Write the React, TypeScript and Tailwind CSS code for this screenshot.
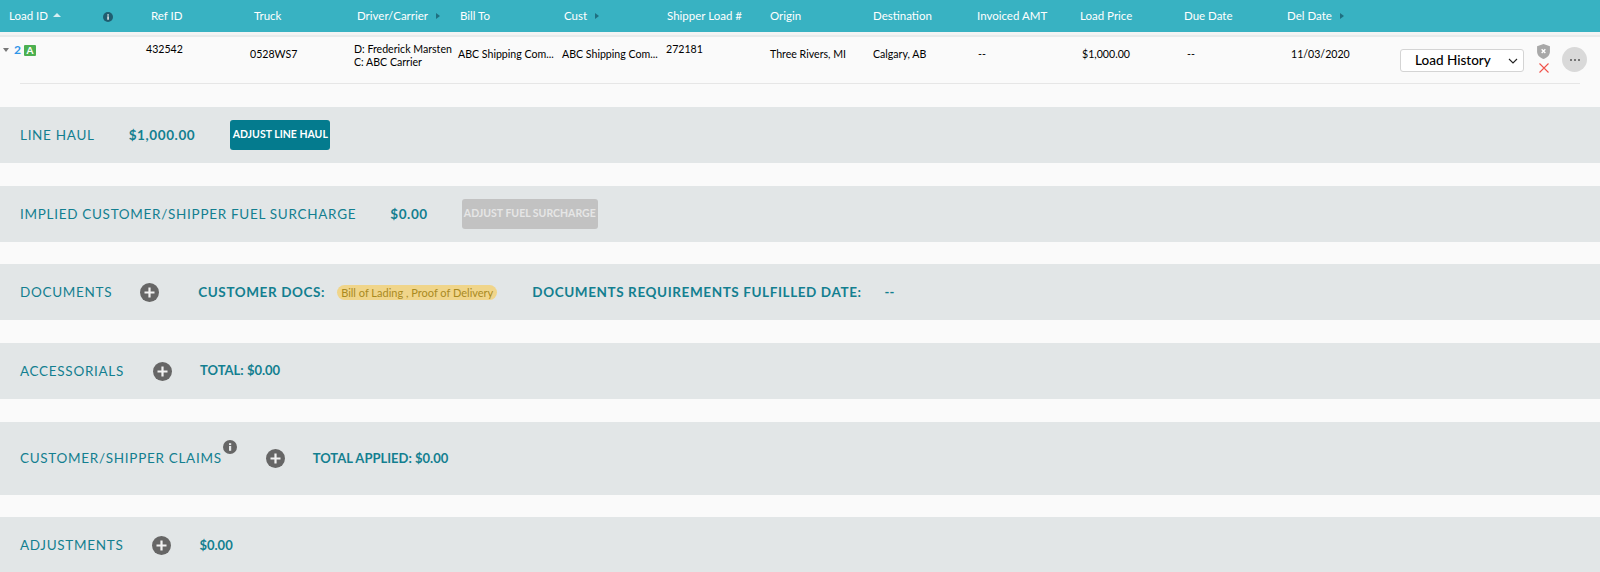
import React from 'react'

const columns = [
  { label: 'Ref ID', w: 'w-[103px]' },
  { label: 'Truck', w: 'w-[103px]' },
  { label: 'Driver/Carrier', w: 'w-[103px]', arrow: true },
  { label: 'Bill To', w: 'w-[104px]' },
  { label: 'Cust', w: 'w-[103px]', arrow: true },
  { label: 'Shipper Load #', w: 'w-[103px]' },
  { label: 'Origin', w: 'w-[103px]' },
  { label: 'Destination', w: 'w-[104px]' },
  { label: 'Invoiced AMT', w: 'w-[103px]' },
  { label: 'Load Price', w: 'w-[104px]' },
  { label: 'Due Date', w: 'w-[103px]' },
  { label: 'Del Date', w: 'w-[103px]', arrow: true },
]

function PlusIcon({ className = '' }: { className?: string }) {
  return (
    <svg viewBox="0 0 19 19" className={`w-[19px] h-[19px] shrink-0 ${className}`}>
      <circle cx="9.5" cy="9.5" r="9.5" fill="#666666" />
      <path d="M9.5 4.5v10M4.5 9.5h10" stroke="#f2f2f2" strokeWidth="2.2" />
    </svg>
  )
}

function InfoIcon({ size, color }: { size: number; color: string }) {
  return (
    <svg viewBox="0 0 14 14" width={size} height={size}>
      <circle cx="7" cy="7" r="7" fill={color} />
      <rect x="6" y="6" width="2.2" height="4.8" fill="#e5e8e9" />
      <rect x="6" y="3.2" width="2.2" height="1.9" fill="#e5e8e9" />
    </svg>
  )
}

function Band({ className = 'h-14', children }: { className?: string; children: React.ReactNode }) {
  return <section className={`flex items-center pl-5 bg-[#e2e6e7] text-[#137f90] ${className}`}>{children}</section>
}

function BandLabel({ children }: { children: React.ReactNode }) {
  return <span className="text-[13.5px] tracking-[0.7px] uppercase whitespace-nowrap">{children}</span>
}

export default function App() {
  return (
    <div className="w-[1600px] h-[572px] overflow-hidden bg-[#fafafa] font-['Lato',sans-serif]">
      <header className="flex items-center h-8 bg-[#38b2c2] text-white text-[11.5px]">
        <div className="flex items-center w-[151px] pl-[9px]">
          <span>Load ID</span>
          <span className="ml-[5px] mb-[2px] border-x-[4px] border-x-transparent border-b-[4px] border-b-[#d5eef2]" />
          <span className="ml-[42px] mt-[1px]"><InfoIcon size={10} color="#1f5d70" /></span>
        </div>
        {columns.map((c) => (
          <div key={c.label} className={`flex items-center shrink-0 ${c.w}`}>
            <span className="whitespace-nowrap">{c.label}</span>
            {c.arrow && <span className="ml-2 border-y-[3.5px] border-y-transparent border-l-[4px] border-l-[#1f6f80]" />}
          </div>
        ))}
      </header>
      <div className="h-[5px] bg-[#f3f4f4] border-b-[2px] border-[#e8ebeb]" />

      <div className="relative h-[70px] text-[10.6px] text-black">
        <div className="flex items-start pt-1">
          <div className="flex items-center w-[146px] pl-[3px] mt-[1px]">
            <span className="border-x-[3.5px] border-x-transparent border-t-[4px] border-t-[#777777]" />
            <span className="ml-[5px] text-[#2f96e8] text-xs font-bold">2</span>
            <span className="ml-[3px] flex items-center justify-center w-3 h-[11px] rounded-[1px] bg-[#4cb050] text-white text-[10px] font-bold leading-none">A</span>
          </div>
          <span className="w-[104px] shrink-0 mt-px">432542</span>
          <span className="w-[104px] shrink-0 mt-[6px]">0528WS7</span>
          <div className="w-[104px] shrink-0 leading-[13px] mt-[2px] whitespace-nowrap">
            <div>D: Frederick Marsten</div>
            <div>C: ABC Carrier</div>
          </div>
          <span className="w-[104px] shrink-0 mt-[6px]">ABC Shipping Com...</span>
          <span className="w-[104px] shrink-0 mt-[6px]">ABC Shipping Com...</span>
          <span className="w-[104px] shrink-0 mt-px">272181</span>
          <span className="w-[103px] shrink-0 mt-[6px]">Three Rivers, MI</span>
          <span className="w-[105px] shrink-0 mt-[6px]">Calgary, AB</span>
          <span className="w-[104px] shrink-0 mt-[6px]">--</span>
          <span className="w-[105px] shrink-0 mt-[6px]">$1,000.00</span>
          <span className="w-[104px] shrink-0 mt-[6px]">--</span>
          <span className="w-[109px] shrink-0 mt-[6px]">11/03/2020</span>
          <div className="flex items-center justify-between w-[124px] h-[23px] mt-2 pl-[14px] pr-[5px] shrink-0 bg-white border border-[#d4d4d4] rounded-[3px]">
            <span className="text-[13.5px] font-medium">Load History</span>
            <svg viewBox="0 0 10 6" className="w-[10px] h-[6px]">
              <path d="M1 1l4 4 4-4" fill="none" stroke="#222222" strokeWidth="1.1" />
            </svg>
          </div>
          <div className="flex flex-col items-center w-[13px] ml-[13px] mt-[3px] shrink-0">
            <svg viewBox="0 0 12 14" className="w-[13px] h-[15px]">
              <path d="M6 0l6 2v5c0 3.4-2.6 5.8-6 7-3.400-1.200-6-3.600-6-7V2z" fill="#a8a8a8" />
              <path d="M4.300 5l3.400 3.400M7.700 5L4.300 8.400" stroke="#ffffff" strokeWidth="1.300" />
            </svg>
            <svg viewBox="0 0 10 10" className="w-[10px] h-[10px] mt-[4px]">
              <path d="M0.500 0.500l9 9M9.500 0.500l-9 9" stroke="#f0524a" strokeWidth="1.100" />
            </svg>
          </div>
          <div className="flex items-center justify-center gap-[2px] w-[25px] h-[25px] ml-3 mt-[6px] shrink-0 rounded-full bg-[#d9d9d9]">
            <span className="w-[2px] h-[2px] rounded-full bg-[#555555]" />
            <span className="w-[2px] h-[2px] rounded-full bg-[#555555]" />
            <span className="w-[2px] h-[2px] rounded-full bg-[#555555]" />
          </div>
        </div>
        <div className="absolute left-5 right-[20px] top-[46px] border-t border-[#e6e6e6]" />
      </div>

      <div className="flex flex-col gap-[22.7px]">
        <Band>
          <BandLabel>Line Haul</BandLabel>
          <span className="ml-[34px] text-[13.5px] font-bold tracking-[0.6px]">$1,000.00</span>
          <button className="ml-[35px] h-[30px] w-[100px] rounded-[3px] bg-[#047b8e] text-white text-[10.5px] font-bold whitespace-nowrap">ADJUST LINE HAUL</button>
        </Band>
        <Band>
          <BandLabel>Implied Customer/Shipper Fuel Surcharge</BandLabel>
          <span className="ml-[34px] text-[13.5px] font-bold tracking-[0.6px]">$0.00</span>
          <button className="ml-[34px] h-[30px] w-[136px] rounded-[3px] bg-[#c2c2c2] text-[#e6e6e6] text-[10.5px] font-bold whitespace-nowrap">ADJUST FUEL SURCHARGE</button>
        </Band>
        <Band>
          <BandLabel>Documents</BandLabel>
          <PlusIcon className="ml-[28px]" />
          <span className="ml-[39px] text-[13.5px] font-bold tracking-[0.6px] whitespace-nowrap">CUSTOMER DOCS:</span>
          <span className="ml-[12px] mt-[1px] h-[15px] px-[4px] rounded-full bg-[#f0d58a] text-[#a98a1f] text-[11px] leading-[15px] whitespace-nowrap">Bill of Lading , Proof of Delivery</span>
          <span className="ml-[35px] text-[13.5px] font-bold tracking-[0.6px] whitespace-nowrap">DOCUMENTS REQUIREMENTS FULFILLED DATE:</span>
          <span className="ml-[23px] text-[13px] font-bold">--</span>
        </Band>
        <Band>
          <BandLabel>Accessorials</BandLabel>
          <PlusIcon className="ml-[29px]" />
          <span className="ml-[28px] text-[13px] font-bold whitespace-nowrap">TOTAL: $0.00</span>
        </Band>
        <Band className="h-[73px]">
          <BandLabel>Customer/Shipper Claims</BandLabel>
          <span className="ml-px mb-[22px]"><InfoIcon size={14} color="#666666" /></span>
          <PlusIcon className="ml-[29px] mt-[1px]" />
          <span className="ml-[28px] mt-[1px] text-[13px] font-bold whitespace-nowrap">TOTAL APPLIED: $0.00</span>
        </Band>
        <Band>
          <BandLabel>Adjustments</BandLabel>
          <PlusIcon className="ml-[29px]" />
          <span className="ml-[28px] text-[13px] font-bold">$0.00</span>
        </Band>
      </div>
    </div>
  )
}
